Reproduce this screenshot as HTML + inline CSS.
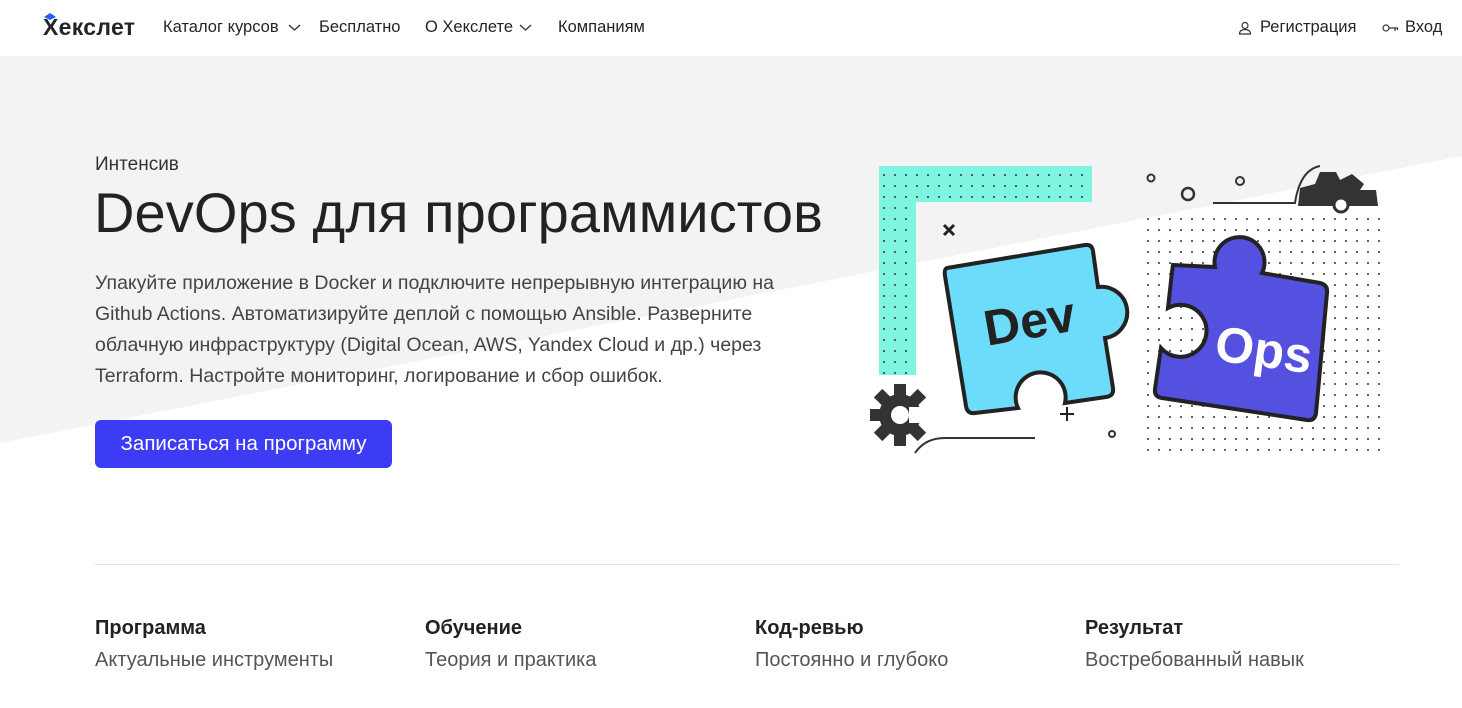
<!DOCTYPE html>
<html><head><meta charset="utf-8"><style>
*{margin:0;padding:0;box-sizing:border-box}
body{width:1462px;height:708px;background:#fff;font-family:"Liberation Sans",sans-serif;color:#212529;position:relative;overflow:hidden}
.bg{position:absolute;left:0;top:56px;width:1462px;height:400px}
.nav{position:absolute;top:0;left:0;width:100%;height:56px;font-size:16.5px}
.nav span{position:absolute;top:18px}
.t{position:absolute}
</style></head><body>
<svg class="bg" width="1462" height="400"><polygon points="0,0 1462,0 1462,100 0,387" fill="#f3f3f3"/></svg>
<div class="nav">
<svg style="position:absolute;left:43px;top:13px" width="14" height="8"><polygon points="1,4 7,0 13,4 7,7" fill="#2b5cff"/></svg>
<span style="left:43px;top:14px;font-size:23px;font-weight:bold;letter-spacing:0.3px">Хекслет</span>
<span style="left:163px">Каталог курсов</span>
<svg style="position:absolute;left:288px;top:24px" width="13" height="8"><polyline points="1,1 6.5,6 12,1" fill="none" stroke="#333" stroke-width="1.3"/></svg>
<span style="left:319px">Бесплатно</span>
<span style="left:425px">О Хекслете</span>
<svg style="position:absolute;left:519px;top:24px" width="13" height="8"><polyline points="1,1 6.5,6 12,1" fill="none" stroke="#333" stroke-width="1.3"/></svg>
<span style="left:558px">Компаниям</span>
<svg style="position:absolute;left:1238px;top:21px" width="14" height="14"><circle cx="7" cy="4.5" r="3" fill="none" stroke="#333" stroke-width="1.2"/><path d="M1.5 13c0-3 2.5-4.5 5.5-4.5s5.5 1.5 5.5 4.5z" fill="none" stroke="#333" stroke-width="1.2"/></svg>
<span style="left:1260px">Регистрация</span>
<svg style="position:absolute;left:1382px;top:23px" width="17" height="10"><circle cx="4" cy="5" r="3" fill="none" stroke="#333" stroke-width="1.2"/><path d="M7 5h9M13 5v3M15.5 5v2" stroke="#333" stroke-width="1.2" fill="none"/></svg>
<span style="left:1405px">Вход</span>
</div>
<div class="t" style="left:95px;top:154px;font-size:19px;color:#333">Интенсив</div>
<div class="t" style="left:94px;top:180px;font-size:56px;color:#222;letter-spacing:0.1px">DevOps для программистов</div>
<div class="t" style="left:95px;top:268px;width:715px;font-size:19.5px;line-height:31px;color:#444">Упакуйте приложение в Docker и подключите непрерывную интеграцию на Github Actions. Автоматизируйте деплой с помощью Ansible. Разверните облачную инфраструктуру (Digital Ocean, AWS, Yandex Cloud и др.) через Terraform. Настройте мониторинг, логирование и сбор ошибок.</div>
<div class="t" style="left:95px;top:420px;width:297px;height:48px;background:#3d3cf5;border-radius:6px;color:#fff;font-size:20.5px;line-height:48px;text-align:center">Записаться на программу</div>
<svg class="t" style="left:870px;top:150px" width="530" height="310">
<defs><pattern id="d" width="11" height="11" patternUnits="userSpaceOnUse"><circle cx="3" cy="3" r="1" fill="#333"/></pattern>
<clipPath id="c"><rect x="400" y="0" width="130" height="47"/></clipPath></defs>
<path d="M9 16H222V52H46V225H9Z" fill="#7ef5e0"/>
<path d="M9 16H222V52H46V225H9Z" fill="url(#d)"/>
<rect x="270" y="65" width="245" height="240" fill="url(#d)"/>
<path d="M77 118 L215 95 Q222 94 223 101 L228 137 A25 25 0 1 1 235 188 L243 238 Q244 246 236 247 L195 253 A25 25 0 1 0 148 258 L105 263 Q97 264 96 256 L75 126 Q74 119 77 118Z" fill="#6ddcfa" stroke="#222" stroke-width="4"/>
<text x="115" y="190" transform="rotate(-10 150 180)" font-family="Liberation Sans" font-weight="bold" font-size="50" fill="#222">Dev</text>
<path d="M303 115 L345 117 A25 25 0 1 1 392 123 L450 133 Q458 135 457 143 L446 263 Q445 271 437 270 L292 248 Q284 247 285 239 L291 198 A26 26 0 1 0 298 158 L302 122 Q303 115 303 115Z" fill="#5450e0" stroke="#222" stroke-width="4"/>
<text x="345" y="215" transform="rotate(8 380 200)" font-family="Liberation Sans" font-weight="bold" font-size="50" fill="#fff">Ops</text>
<path d="M74 75l10 10M84 75l-10 10" stroke="#222" stroke-width="3"/>
<path d="M197 257v14M190 264h14" stroke="#222" stroke-width="2"/>
<circle cx="242" cy="284" r="3" fill="none" stroke="#333" stroke-width="2"/>
<circle cx="281" cy="28" r="3.5" fill="none" stroke="#333" stroke-width="2"/>
<circle cx="318" cy="44" r="6" fill="none" stroke="#333" stroke-width="2.5"/>
<circle cx="370" cy="31" r="4" fill="none" stroke="#333" stroke-width="2"/>
<path d="M343 53H425Q430 20 450 16" fill="none" stroke="#333" stroke-width="2"/>
<path d="M428 56 L430 38 L445 34 L450 22 L466 22 L470 30 L482 24 L494 34 L490 40 L506 40 L508 56 Z" fill="#333"/>
<circle cx="471" cy="55" r="7" fill="#fff" stroke="#333" stroke-width="3"/>
<g transform="translate(30 265)" fill="#333">
<circle r="21"/>
<rect x="-6" y="-31" width="12" height="12"/><rect x="-6" y="-31" width="12" height="12" transform="rotate(45)"/><rect x="-6" y="-31" width="12" height="12" transform="rotate(135)"/><rect x="-6" y="-31" width="12" height="12" transform="rotate(180)"/><rect x="-6" y="-31" width="12" height="12" transform="rotate(225)"/><rect x="-6" y="-31" width="12" height="12" transform="rotate(270)"/><rect x="-6" y="-31" width="12" height="12" transform="rotate(315)"/>
<circle r="9" fill="#fff"/>
<rect x="9" y="-8" width="25" height="16" fill="#fff"/>
</g>
<path d="M45 303Q55 288 75 288H165" fill="none" stroke="#333" stroke-width="2"/>
</svg>
<div class="t" style="left:95px;top:564px;width:1304px;height:1px;background:#e3e3e3"></div>
<div class="t" style="left:95px;top:617px;font-size:20px;font-weight:bold;color:#222">Программа</div>
<div class="t" style="left:95px;top:649px;font-size:20px;color:#555">Актуальные инструменты</div>
<div class="t" style="left:425px;top:617px;font-size:20px;font-weight:bold;color:#222">Обучение</div>
<div class="t" style="left:425px;top:649px;font-size:20px;color:#555">Теория и практика</div>
<div class="t" style="left:755px;top:617px;font-size:20px;font-weight:bold;color:#222">Код-ревью</div>
<div class="t" style="left:755px;top:649px;font-size:20px;color:#555">Постоянно и глубоко</div>
<div class="t" style="left:1085px;top:617px;font-size:20px;font-weight:bold;color:#222">Результат</div>
<div class="t" style="left:1085px;top:649px;font-size:20px;color:#555">Востребованный навык</div>
</body></html>
